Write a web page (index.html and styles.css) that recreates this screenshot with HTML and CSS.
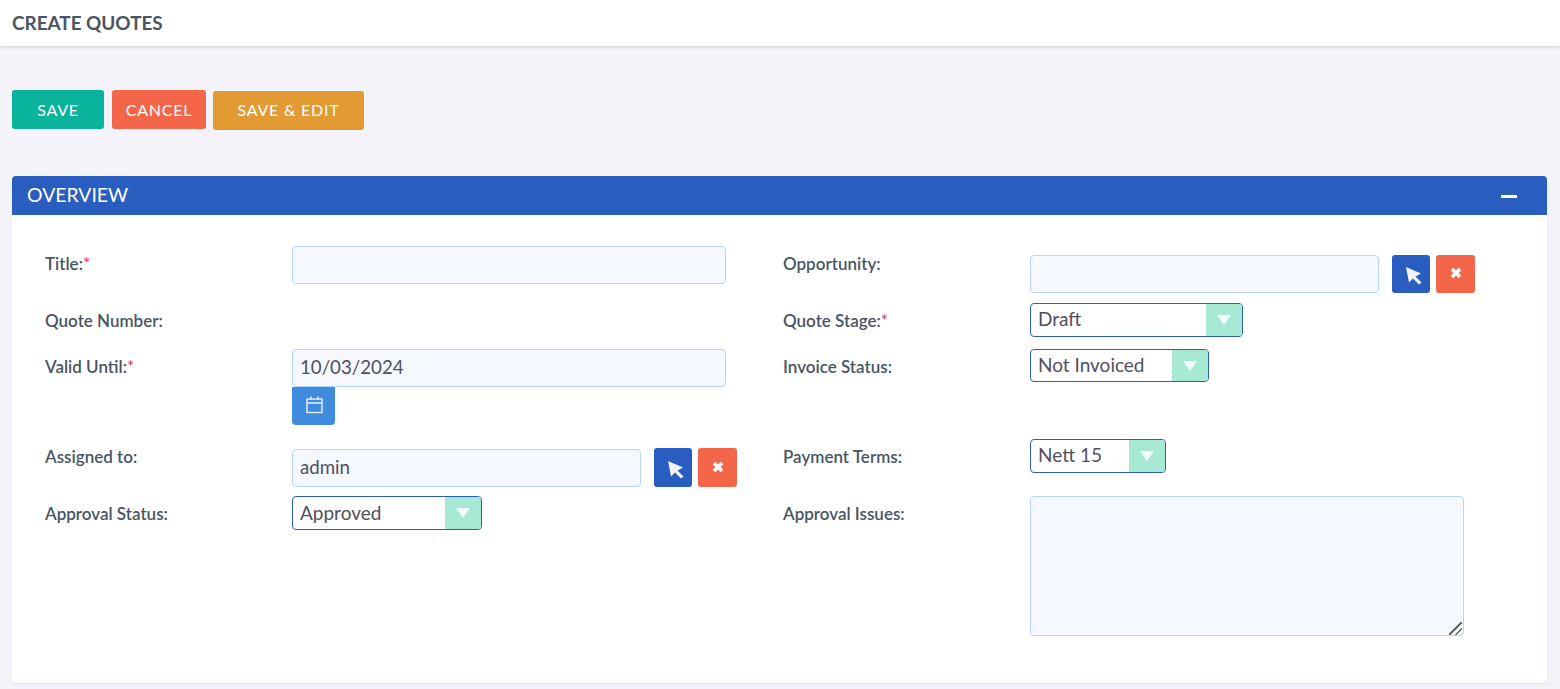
FILE: index.html
```html
<!DOCTYPE html>
<html lang="en">
<head>
<meta charset="utf-8">
<title>Create Quotes</title>
<link rel="stylesheet" href="styles.css">
</head>
<body>
<header class="topbar"><h1>CREATE QUOTES</h1></header>
<div class="actions">
  <button class="btn btn-save">SAVE</button>
  <button class="btn btn-cancel">CANCEL</button>
  <button class="btn btn-edit">SAVE &amp; EDIT</button>
</div>
<section class="panel">
  <div class="panel-head"><h2>OVERVIEW</h2><span class="minus"></span></div>
  <div class="form">
    <div class="lbl">Title:<span class="req">*</span></div>
    <div class="cell"><input class="input w434" type="text"></div>
    <div class="lbl">Opportunity:</div>
    <div class="cell relate drop9">
      <input class="input w349" type="text">
      <button class="icon-btn pick"><svg viewBox="0 0 16 18" width="16" height="18"><path d="M0 0L15 6.500L9.500 9.500L15.500 15.500L13 17.500L7 11.500L3 15.500Z" fill="#f3f3f9"/></svg></button>
      <button class="icon-btn clear"><svg viewBox="0 0 12 12" width="12" height="12"><path d="M2 2L10 10M10 2L2 10" stroke="#fff" stroke-width="3.800"/></svg></button>
    </div>

    <div class="lbl">Quote Number:</div>
    <div class="cell"></div>
    <div class="lbl">Quote Stage:<span class="req">*</span></div>
    <div class="cell"><div class="select w213"><span class="val">Draft</span><span class="arrow"></span></div></div>

    <div class="lbl">Valid Until:<span class="req">*</span></div>
    <div class="cell">
      <input class="input w434" type="text" value="10/03/2024">
      <button class="cal"><svg viewBox="0 0 17 18" width="17" height="18" fill="none" stroke="#e6f0fb" stroke-width="1.400"><rect x="1" y="3" width="15" height="13.500"/><path d="M1 7H16M5 .5V4M12 .5V4"/></svg></button>
    </div>
    <div class="lbl">Invoice Status:</div>
    <div class="cell"><div class="select w179 h33"><span class="val">Not Invoiced</span><span class="arrow"></span></div></div>

    <div class="lbl">Assigned to:</div>
    <div class="cell relate relate-sm drop9">
      <input class="input w349" type="text" value="admin">
      <button class="icon-btn pick tall"><svg viewBox="0 0 16 18" width="16" height="18"><path d="M0 0L15 6.500L9.500 9.500L15.500 15.500L13 17.500L7 11.500L3 15.500Z" fill="#f3f3f9"/></svg></button>
      <button class="icon-btn clear tall"><svg viewBox="0 0 12 12" width="12" height="12"><path d="M2 2L10 10M10 2L2 10" stroke="#fff" stroke-width="3.800"/></svg></button>
    </div>
    <div class="lbl">Payment Terms:</div>
    <div class="cell"><div class="select w136"><span class="val">Nett 15</span><span class="arrow"></span></div></div>

    <div class="lbl">Approval Status:</div>
    <div class="cell"><div class="select w190 low"><span class="val">Approved</span><span class="arrow"></span></div></div>
    <div class="lbl">Approval Issues:</div>
    <div class="cell"><textarea class="input area"></textarea></div>
  </div>
</section>
</body>
</html>
```
FILE: styles.css
```css
* { box-sizing: border-box; }
html, body { margin: 0; padding: 0; }
body {
  height: 689px;
  overflow: hidden;
  background: #f3f3f9;
  font-family: Lato, "Liberation Sans", sans-serif;
  color: #495057;
}
.topbar {
  height: 46px;
  background: #fff;
  box-shadow: 0 1px 3px rgba(56, 65, 74, .2);
  padding: 0 0 1px 12px;
  display: flex;
  align-items: center;
}
.topbar h1 {
  margin: 0;
  font-size: 18.900px;
  font-weight: 700;
  color: #495563;
}
.actions {
  display: flex;
  align-items: flex-start;
  padding: 44px 0 0 12px;
  height: 130px;
}
.btn {
  border: 0;
  border-radius: 3px;
  color: #fff;
  font: 400 16px/38px Lato, "Liberation Sans", sans-serif;
  letter-spacing: .8px;
  padding: 0;
  height: 39px;
}
.btn-save { width: 92px; background: #0ab39c; margin-right: 8px; }
.btn-cancel { width: 94px; background: #f3664a; margin-right: 7px; }
.btn-edit { width: 151px; background: #e39a33; margin-top: 1px; padding-bottom: 1px; }
.panel {
  margin: 0 13px 0 12px;
  background: #fff;
  border-radius: 4px;
  box-shadow: 0 1px 2px rgba(56, 65, 74, .1);
}
.panel-head {
  height: 39px;
  background: #2a5dc0;
  border-radius: 4px 4px 0 0;
  display: flex;
  align-items: center;
  justify-content: space-between;
  padding: 0 30px 2px 15px;
}
.panel-head h2 {
  margin: 0;
  font-size: 19.400px;
  font-weight: 400;
  color: #fff;
}
.minus {
  width: 16px;
  height: 3px;
  background: #fff;
  margin-top: 4px;
}
.form {
  display: grid;
  grid-template-columns: 247px 491px 247px 1fr;
  grid-template-rows: 57px 46px 90px 57px auto;
  padding: 31px 0 47px 33px;
}
.lbl {
  padding-top: 8px;
  font-size: 17px;
  line-height: 20px;
  font-weight: 600;
  color: #495563;
}
.req { color: #f0304a; font-weight: 400; }
.cell { min-width: 0; }
.relate { display: flex; align-items: flex-start; }
.drop9 { padding-top: 9px; }
.relate-sm { padding-top: 10px; }
.input {
  display: block;
  height: 38px;
  background: #f5f9ff;
  border: 1px solid #b5d5fd;
  border-radius: 4px;
  padding: 0 7px 2px;
  font: 400 18.700px Lato, "Liberation Sans", sans-serif;
  color: #514f60;
  outline: 0;
}
.w434 { width: 434px; }
.w349 { width: 349px; }
.area { width: 434px; height: 140px; resize: both; }
.area::-webkit-resizer {
  background: linear-gradient(135deg, transparent 46%, #666 46%, #666 54%, transparent 54%, transparent 71%, #666 71%, #666 79%, transparent 79%) 1px 2px / 13px 13px no-repeat;
}
.icon-btn {
  width: 38px;
  height: 38px;
  border: 0;
  border-radius: 3px;
  padding: 0;
  display: flex;
  align-items: center;
  justify-content: center;
}
.icon-btn.tall { height: 39px; margin-top: -1px; }
.pick { background: #2a5dc0; margin-left: 13px; padding: 4px 0 0 6px; }
.clear { background: #f3664a; margin-left: 6px; width: 39px; padding-bottom: 2px; }
.cal {
  display: flex;
  align-items: center;
  justify-content: center;
  width: 43px;
  height: 38px;
  padding: 0 0 3px 1px;
  border: 0;
  border-radius: 0 0 4px 4px;
  background: #3f8cde;
}
.select {
  display: flex;
  align-items: stretch;
  height: 34px;
  background: #fff;
  border: 1px solid #2a5dc0;
  border-radius: 4px;
  overflow: hidden;
}
.h33 { height: 33px; }
.w213 { width: 213px; }
.w179 { width: 179px; }
.w136 { width: 136px; }
.w190 { width: 190px; }
.val {
  flex: 1;
  padding-left: 7px;
  font-size: 19px;
  line-height: 29px;
  color: #514f60;
}
.low .val { line-height: 31px; }
.arrow {
  width: 36px;
  background: #a8e9d6;
  display: flex;
  align-items: center;
  justify-content: center;
}
.arrow::after {
  content: "";
  border-style: solid;
  border-width: 10px 7.5px 0;
  border-color: #f3fbf9 transparent transparent;
}
```
